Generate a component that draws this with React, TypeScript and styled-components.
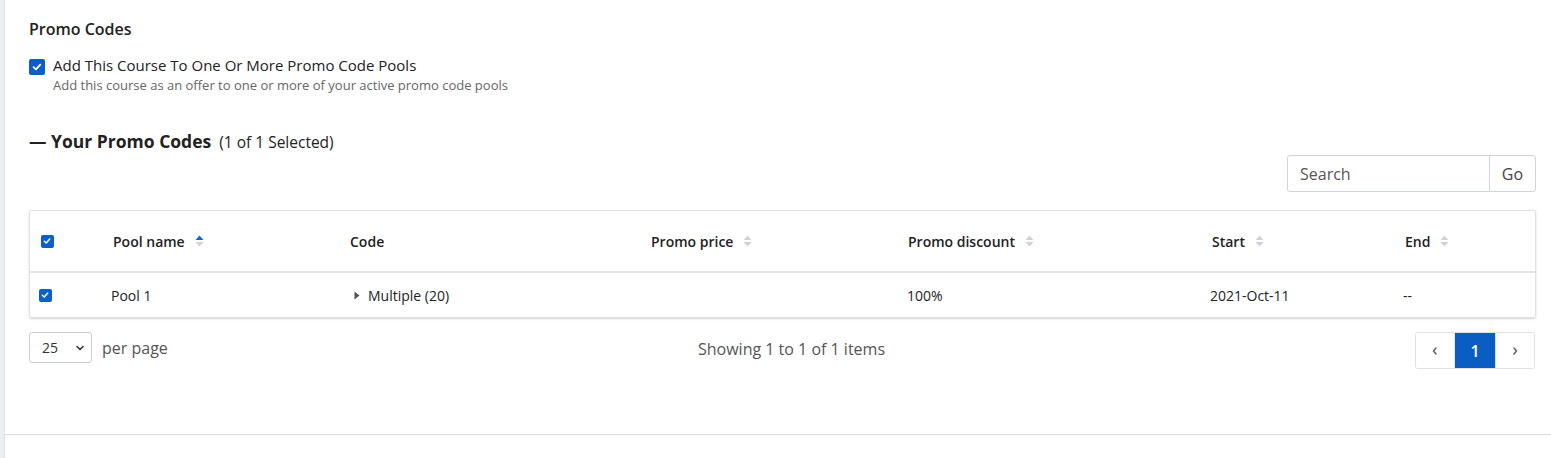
import React from "react";
import styled, { createGlobalStyle } from "styled-components";

const Global = createGlobalStyle`
  html, body { margin: 0; padding: 0; background: #fff; }
  body { font-family: "Open Sans", "Noto Sans", sans-serif; color: #222; }
  * { box-sizing: border-box; }
`;

const Page = styled.div`
  display: flex;
  width: 1551px;
  height: 458px;
  overflow: hidden;
`;

const SideStrip = styled.div`
  width: 5px;
  flex: none;
  background: #e9eff5;
  border-right: 1px solid #dde3ea;
`;

const Main = styled.div`
  flex: 1;
  display: flex;
  flex-direction: column;
`;

const Content = styled.div`
  padding: 19px 15px 0 24px;
  height: 435px;
  border-bottom: 1px solid #dcdcdc;
`;

const Title = styled.div`
  font-size: 16px;
  line-height: 20px;
  font-weight: 600;
  color: #222;
`;

const OptionRow = styled.div`
  display: flex;
  gap: 8px;
  margin-top: 16px;
`;

const CheckBox = styled.span<{ $size: number }>`
  display: inline-flex;
  align-items: center;
  justify-content: center;
  width: ${(p) => p.$size}px;
  height: ${(p) => p.$size}px;
  background: #0b5fc6;
  border-radius: 2px;
  flex: none;
  margin-top: ${(p) => (p.$size > 14 ? 4 : 0)}px;
`;

const OptionText = styled.div`
  display: flex;
  flex-direction: column;
`;

const OptionLabel = styled.div`
  font-size: 15px;
  line-height: 20px;
  color: #222;
`;

const OptionHint = styled.div`
  font-size: 13px;
  line-height: 16px;
  color: #666;
  margin-top: 2px;
`;

const SectionHeading = styled.div`
  display: flex;
  align-items: baseline;
  gap: 8px;
  margin-top: 37px;
  line-height: 22px;
`;

const HeadingMain = styled.span`
  font-size: 17.5px;
  font-weight: 700;
  color: #222;
`;

const HeadingSub = styled.span`
  font-size: 15.5px;
  color: #222;
`;

const SearchBar = styled.div`
  display: flex;
  justify-content: flex-end;
  margin-top: 2px;
`;

const SearchGroup = styled.div`
  display: flex;
  height: 37px;
  border: 1px solid #cfd4da;
  border-radius: 3px;
`;

const SearchInput = styled.div`
  width: 202px;
  padding: 0 12px;
  display: flex;
  align-items: center;
  font-size: 16px;
  color: #555;
  border-right: 1px solid #cfd4da;
`;

const GoButton = styled.div`
  width: 45px;
  display: flex;
  align-items: center;
  justify-content: center;
  font-size: 16px;
  color: #444;
`;

const TableBox = styled.div`
  margin-top: 18px;
  border: 1px solid #dfe3e8;
  border-radius: 2px;
  box-shadow: 0 1px 2px rgba(0, 0, 0, 0.18);
`;

const cols = "68px 237px 301px 257px 304px 193px 1fr";

const HeaderRow = styled.div`
  display: grid;
  grid-template-columns: ${cols};
  height: 62px;
  border-bottom: 2px solid #e1e5ea;
`;

const BodyRow = styled.div`
  display: grid;
  grid-template-columns: ${cols};
  height: 44px;
`;

const HeadCell = styled.div<{ $pad?: number }>`
  display: flex;
  align-items: center;
  gap: 10px;
  padding-left: ${(p) => p.$pad ?? 15}px;
  font-size: 14px;
  font-weight: 600;
  color: #222;
`;

const BodyCell = styled.div<{ $pad?: number }>`
  display: flex;
  align-items: center;
  gap: 8px;
  padding-left: ${(p) => p.$pad ?? 13}px;
  font-size: 14px;
  color: #222;
`;

const Footer = styled.div`
  display: grid;
  grid-template-columns: 1fr auto 1fr;
  align-items: start;
  margin-top: 14px;
`;

const PerPage = styled.div`
  display: flex;
  align-items: center;
  gap: 10px;
  height: 31px;
`;

const Select = styled.div`
  width: 63px;
  height: 31px;
  border: 1px solid #c9ced4;
  border-radius: 3px;
  display: flex;
  align-items: center;
  justify-content: space-between;
  padding: 0 6px 0 12px;
  font-size: 14px;
  color: #333;
`;

const Muted = styled.span`
  font-size: 16px;
  color: #555;
`;

const Showing = styled.div`
  font-size: 16px;
  color: #555;
  line-height: 31px;
  margin: 2px 0 0 18px;
`;

const Pager = styled.div`
  justify-self: end;
  display: flex;
  height: 37px;
  border: 1px solid #dee2e6;
  border-radius: 3px;
  overflow: hidden;
  margin-right: 1px;
`;

const PageBtn = styled.div<{ $active?: boolean; $w: number }>`
  width: ${(p) => p.$w}px;
  display: flex;
  align-items: center;
  justify-content: center;
  font-size: ${(p) => (p.$active ? 16 : 14)}px;
  font-weight: ${(p) => (p.$active ? 600 : 400)};
  background: ${(p) => (p.$active ? "#0a5ec3" : "#fff")};
  color: ${(p) => (p.$active ? "#fff" : "#555")};
  border-left: ${(p) => (p.$active ? "1px solid #dee2e6" : "none")};
  border-right: ${(p) => (p.$active ? "1px solid #dee2e6" : "none")};
`;

const Check = ({ size }: { size: number }) => (
  <CheckBox $size={size}>
    <svg width={size * 0.62} height={size * 0.62} viewBox="0 0 10 10">
      <path d="M1.6 5.2 L4 7.4 L8.4 2.6" fill="none" stroke="#fff" strokeWidth="1.8" strokeLinecap="round" strokeLinejoin="round" />
    </svg>
  </CheckBox>
);

const Sort = ({ active }: { active?: boolean }) => (
  <svg width="9" height="12" viewBox="0 0 9 12">
    <path d="M4.5 0.5 L8.5 5 L0.5 5 Z" fill={active ? "#1868c4" : "#cfd3d8"} />
    <path d="M0.5 7 L8.5 7 L4.5 11.5 Z" fill="#cfd3d8" />
  </svg>
);

const Caret = () => (
  <svg width="6" height="9" viewBox="0 0 6 9">
    <path d="M0.5 0.5 L5.5 4.5 L0.5 8.5 Z" fill="#555" />
  </svg>
);

const Chevron = ({ dir }: { dir: "down" | "left" | "right" }) => {
  const d =
    dir === "down"
      ? "M2 3.5 L5 6.5 L8 3.5"
      : dir === "left"
      ? "M6 2 L3.5 5 L6 8"
      : "M4 2 L6.5 5 L4 8";
  return (
    <svg width="10" height="10" viewBox="0 0 10 10">
      <path d={d} fill="none" stroke={dir === "down" ? "#333" : "#666"} strokeWidth="1.6" strokeLinecap="round" strokeLinejoin="round" />
    </svg>
  );
};

export default function App() {
  return (
    <>
      <Global />
      <Page>
        <SideStrip />
        <Main>
          <Content>
            <Title>Promo Codes</Title>
            <OptionRow>
              <Check size={16} />
              <OptionText>
                <OptionLabel>Add This Course To One Or More Promo Code Pools</OptionLabel>
                <OptionHint>Add this course as an offer to one or more of your active promo code pools</OptionHint>
              </OptionText>
            </OptionRow>
            <SectionHeading>
              <HeadingMain>— Your Promo Codes</HeadingMain>
              <HeadingSub>(1 of 1 Selected)</HeadingSub>
            </SectionHeading>
            <SearchBar>
              <SearchGroup>
                <SearchInput>Search</SearchInput>
                <GoButton>Go</GoButton>
              </SearchGroup>
            </SearchBar>
            <TableBox>
              <HeaderRow>
                <HeadCell $pad={11}>
                  <Check size={13} />
                </HeadCell>
                <HeadCell>
                  Pool name <Sort active />
                </HeadCell>
                <HeadCell>Code</HeadCell>
                <HeadCell>
                  Promo price <Sort />
                </HeadCell>
                <HeadCell>
                  Promo discount <Sort />
                </HeadCell>
                <HeadCell>
                  Start <Sort />
                </HeadCell>
                <HeadCell>
                  End <Sort />
                </HeadCell>
              </HeaderRow>
              <BodyRow>
                <BodyCell $pad={9}>
                  <Check size={13} />
                </BodyCell>
                <BodyCell>Pool 1</BodyCell>
                <BodyCell $pad={19}>
                  <Caret /> Multiple (20)
                </BodyCell>
                <BodyCell></BodyCell>
                <BodyCell $pad={14}>100%</BodyCell>
                <BodyCell>2021-Oct-11</BodyCell>
                <BodyCell>--</BodyCell>
              </BodyRow>
            </TableBox>
            <Footer>
              <PerPage>
                <Select>
                  25 <Chevron dir="down" />
                </Select>
                <Muted>per page</Muted>
              </PerPage>
              <Showing>Showing 1 to 1 of 1 items</Showing>
              <Pager>
                <PageBtn $w={38}>
                  <Chevron dir="left" />
                </PageBtn>
                <PageBtn $w={42} $active>
                  1
                </PageBtn>
                <PageBtn $w={38}>
                  <Chevron dir="right" />
                </PageBtn>
              </Pager>
            </Footer>
          </Content>
        </Main>
      </Page>
    </>
  );
}
